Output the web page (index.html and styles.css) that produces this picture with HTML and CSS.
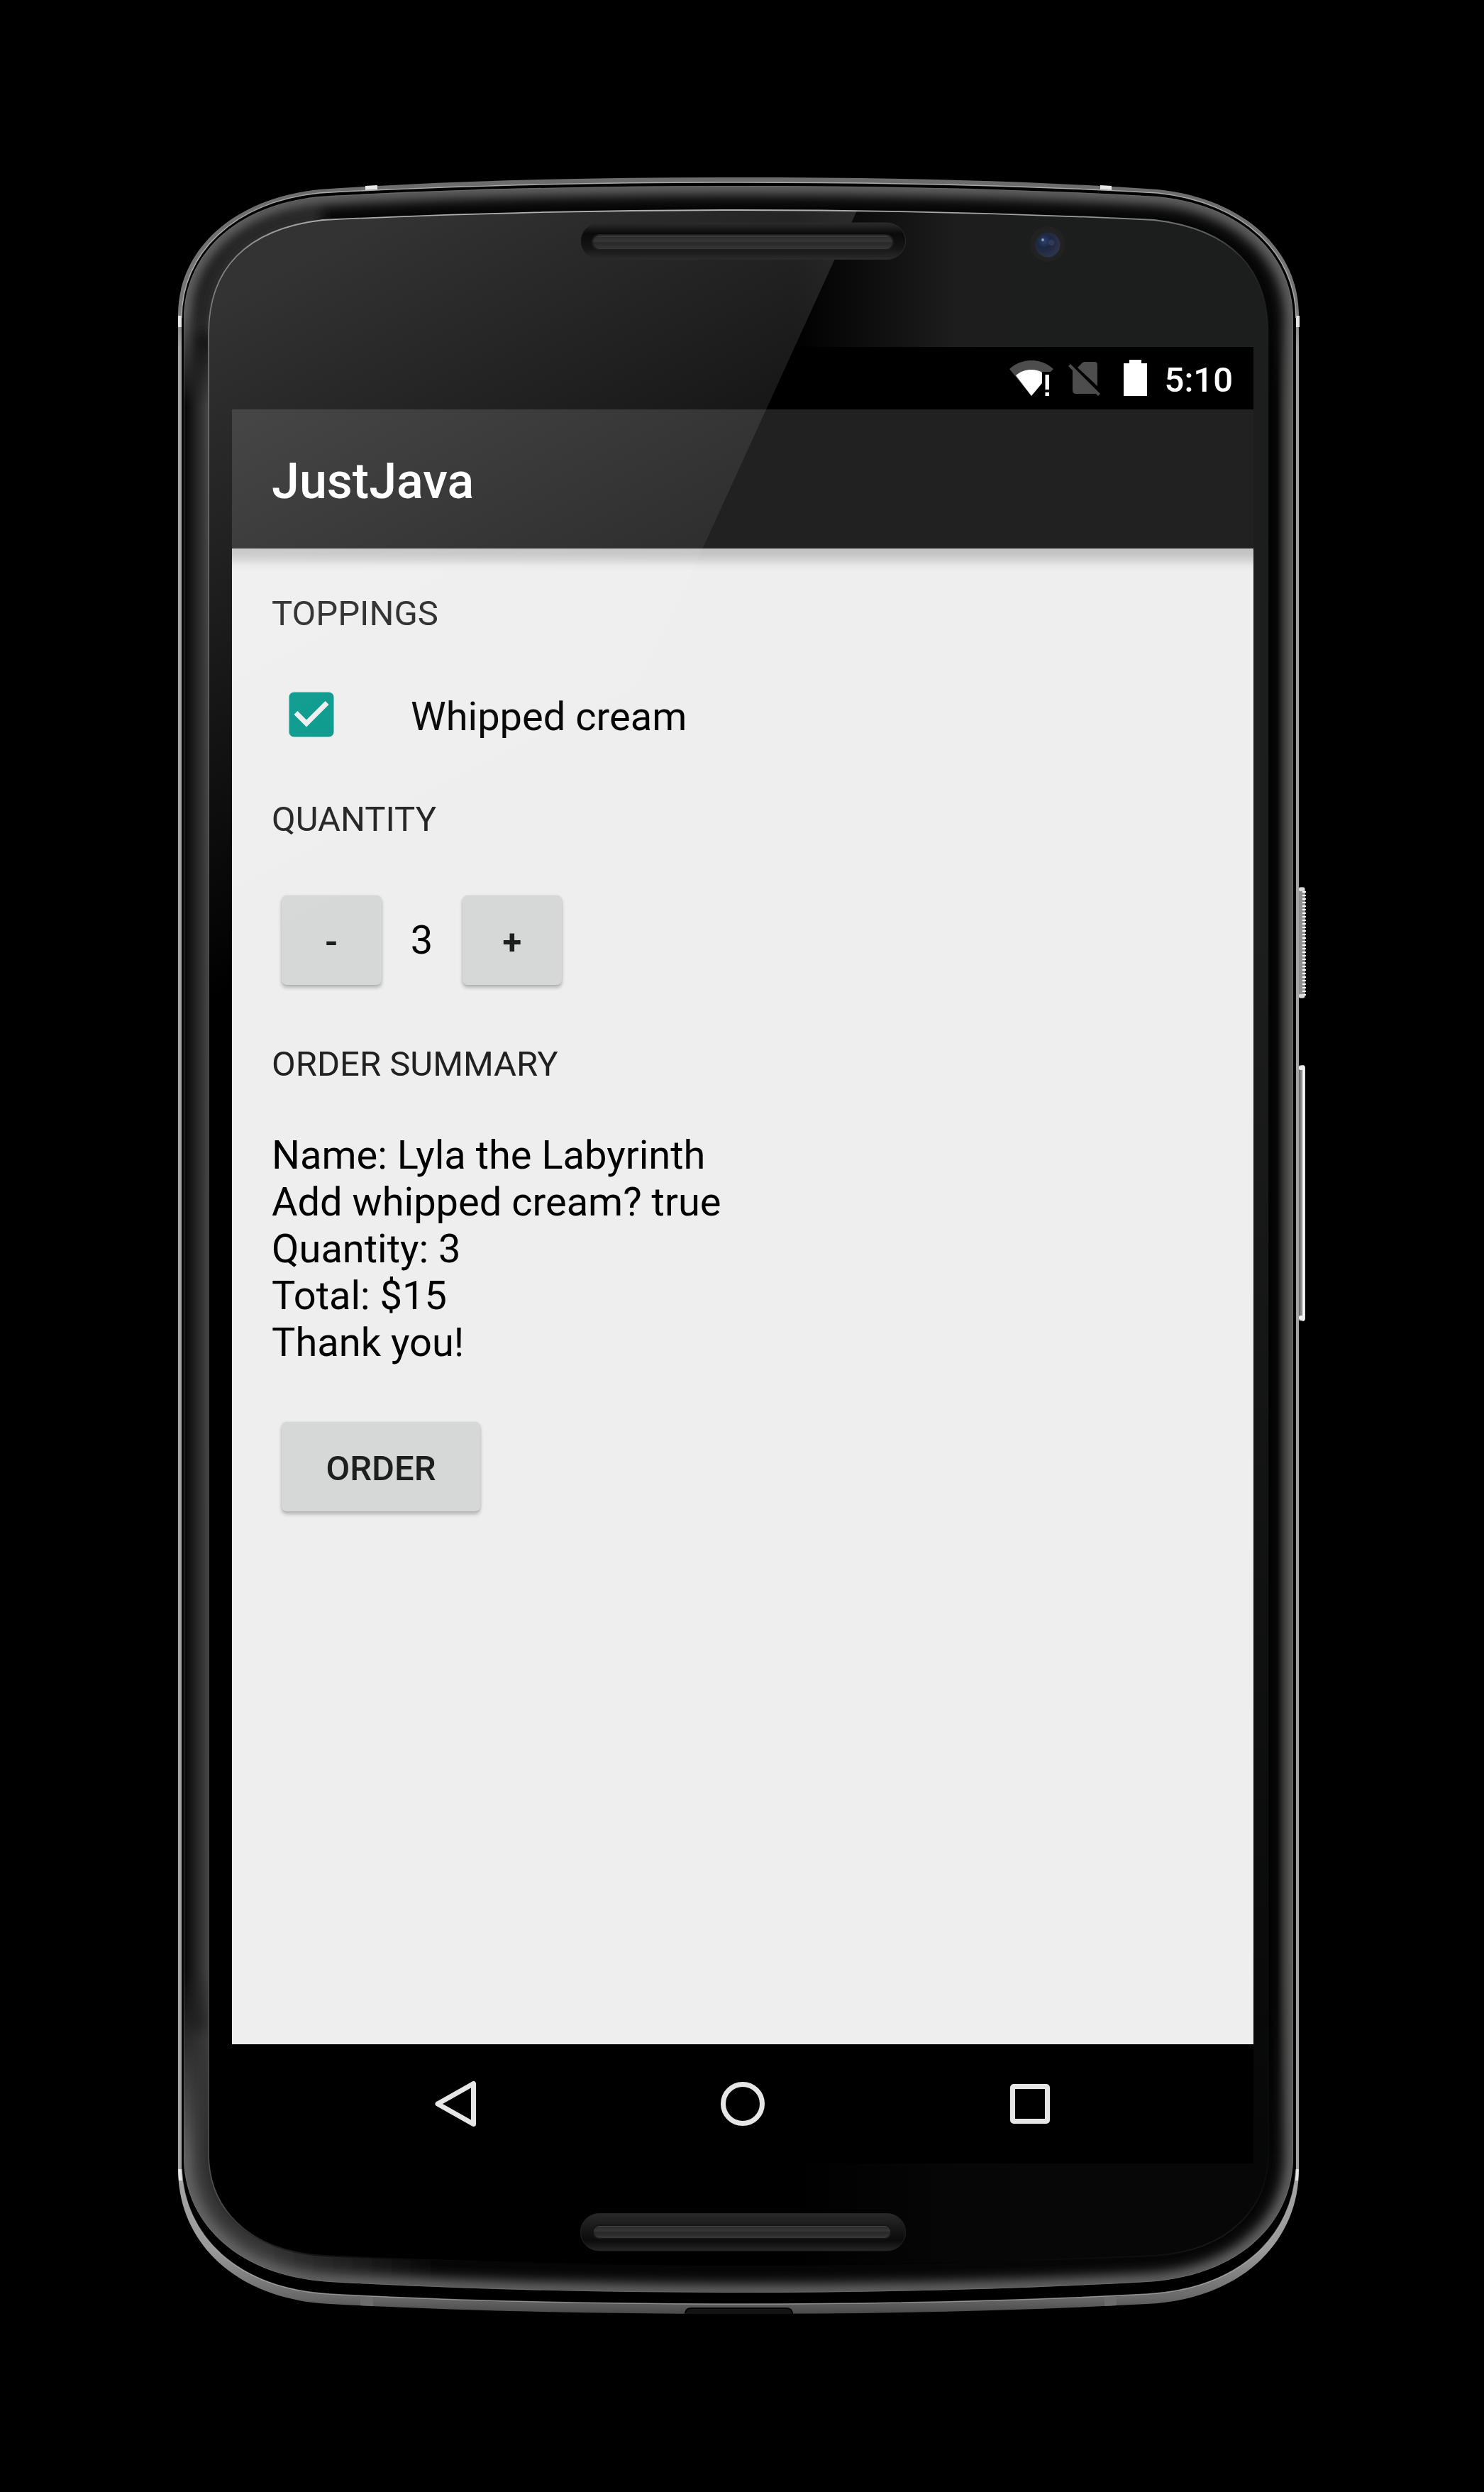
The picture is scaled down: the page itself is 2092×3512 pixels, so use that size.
FILE: index.html
```html
<!DOCTYPE html>
<html lang="en">
<head>
<meta charset="utf-8">
<title>JustJava</title>
<link rel="stylesheet" href="styles.css">
</head>
<body>
<div class="stage">
  <svg class="device" viewBox="0 0 2092 3512" aria-hidden="true">
    <defs>
      <path id="shell" d="M251 444C251 354 326 280 450 267C640 254 840 250 1041 250C1242 250 1442 254 1632 267C1756 280 1831 354 1831 444V3057C1831 3160 1750 3240 1617 3247C1430 3257 1240 3261 1041 3261C842 3261 652 3257 465 3247C332 3240 251 3160 251 3057Z"/>
      <path id="rim" d="M256 448C256 358 328 285 450 272C640 261 840 257 1041 257C1242 257 1442 261 1632 272C1754 285 1827 358 1827 448V3057C1822 3150 1750 3225 1617 3233C1430 3243 1240 3247 1041 3247C842 3247 652 3243 465 3233C332 3225 260 3150 256 3057Z"/>
      <path id="bezel" d="M259 450C259 360 330 289 450 277C640 266 840 262 1041 262C1242 262 1442 266 1632 277C1752 289 1823 360 1823 450V3040C1823 3130 1750 3208 1617 3216C1430 3226 1240 3231 1041 3231C842 3231 652 3226 465 3216C332 3208 259 3130 259 3040Z"/>
      <path id="glass" d="M294 470C294 380 345 323 455 310C640 301 840 296 1041 296C1242 296 1442 301 1627 310C1737 323 1788 380 1788 470V3035C1788 3110 1735 3172 1627 3179C1430 3188 1240 3192 1041 3192C842 3192 652 3188 455 3179C347 3172 294 3110 294 3035Z"/>
      <clipPath id="bezelClip"><use href="#bezel"/></clipPath>
      <linearGradient id="metal" x1="0" y1="250" x2="0" y2="3262" gradientUnits="userSpaceOnUse">
        <stop offset="0" stop-color="#6c6c6c"/><stop offset=".06" stop-color="#777"/><stop offset=".08" stop-color="#a5a5a5"/>
        <stop offset=".93" stop-color="#a5a5a5"/><stop offset=".97" stop-color="#9a9a9a"/><stop offset=".992" stop-color="#696969"/><stop offset="1" stop-color="#484848"/>
      </linearGradient>
      <linearGradient id="leftSide" x1="259" y1="0" x2="294" y2="0" gradientUnits="userSpaceOnUse">
        <stop offset="0" stop-color="#050505"/><stop offset=".3" stop-color="#161616"/><stop offset="1" stop-color="#464646"/>
      </linearGradient>
      <linearGradient id="rightSide" x1="1788" y1="0" x2="1824" y2="0" gradientUnits="userSpaceOnUse">
        <stop offset="0" stop-color="#000"/><stop offset=".35" stop-color="#080808"/><stop offset=".62" stop-color="#3c3c3b"/><stop offset="1" stop-color="#666664"/>
      </linearGradient>
      <linearGradient id="sideFade" x1="0" y1="440" x2="0" y2="3090" gradientUnits="userSpaceOnUse">
        <stop offset="0" stop-color="#000"/><stop offset=".05" stop-color="#fff"/><stop offset=".88" stop-color="#fff"/><stop offset=".98" stop-color="#000"/>
      </linearGradient>
      <mask id="sideMask" maskUnits="userSpaceOnUse" x="250" y="430" width="1590" height="2670"><rect x="250" y="430" width="1590" height="2670" fill="url(#sideFade)"/></mask>
      <linearGradient id="cornerTone" x1="380" y1="0" x2="620" y2="0" gradientUnits="userSpaceOnUse">
        <stop offset="0" stop-color="#343434"/><stop offset="1" stop-color="#343434" stop-opacity="0"/>
      </linearGradient>
      <linearGradient id="glassAcross" x1="1120" y1="0" x2="1500" y2="0" gradientUnits="userSpaceOnUse">
        <stop offset="0" stop-color="#1c1e1d" stop-opacity="0"/><stop offset=".6" stop-color="#1d1d1d"/><stop offset="1" stop-color="#1c1e1d"/>
      </linearGradient>
      <linearGradient id="glassDown" x1="0" y1="1300" x2="0" y2="3050" gradientUnits="userSpaceOnUse">
        <stop offset="0" stop-color="#000" stop-opacity="0"/><stop offset="1" stop-color="#000" stop-opacity=".78"/>
      </linearGradient>
      <linearGradient id="edgeLine" x1="0" y1="296" x2="0" y2="3192" gradientUnits="userSpaceOnUse">
        <stop offset="0" stop-color="#aaa"/><stop offset=".02" stop-color="#777"/><stop offset=".05" stop-color="#666"/><stop offset=".5" stop-color="#444"/><stop offset=".97" stop-color="#4c4c4c"/><stop offset=".993" stop-color="#1c1c1c"/><stop offset="1" stop-color="#000"/>
      </linearGradient>
      <linearGradient id="edgeAcross" x1="1500" y1="0" x2="1788" y2="0" gradientUnits="userSpaceOnUse">
        <stop offset="0" stop-color="#fff"/><stop offset=".7" stop-color="#999"/><stop offset="1" stop-color="#111"/>
      </linearGradient>
      <mask id="edgeMask" maskUnits="userSpaceOnUse" x="250" y="250" width="1600" height="3000"><rect x="250" y="250" width="1600" height="3000" fill="url(#edgeAcross)"/></mask>
      <linearGradient id="slotTop" x1="0" y1="0" x2="0" y2="1">
        <stop offset="0" stop-color="#2c2c2c"/><stop offset=".3" stop-color="#0a0a0a"/><stop offset=".7" stop-color="#151515"/><stop offset="1" stop-color="#2b2b2b"/>
      </linearGradient>
      <linearGradient id="slotBottom" x1="0" y1="0" x2="0" y2="1">
        <stop offset="0" stop-color="#292929"/><stop offset=".32" stop-color="#1b1b1b"/><stop offset=".72" stop-color="#0b0b0b"/><stop offset="1" stop-color="#262626"/>
      </linearGradient>
      <linearGradient id="bar" x1="0" y1="0" x2="0" y2="1">
        <stop offset="0" stop-color="#585858"/><stop offset=".16" stop-color="#2c2c2c"/><stop offset=".4" stop-color="#363636"/><stop offset=".55" stop-color="#282828"/><stop offset="1" stop-color="#383838"/>
      </linearGradient>
      <radialGradient id="lens" cx=".35" cy=".35" r=".7">
        <stop offset="0" stop-color="#2b426d"/><stop offset=".4" stop-color="#1d2740"/><stop offset="1" stop-color="#2f344c"/>
      </radialGradient>
      <linearGradient id="key" x1="0" y1="0" x2="1" y2="0">
        <stop offset="0" stop-color="#555"/><stop offset=".55" stop-color="#9a9a9a"/><stop offset=".7" stop-color="#fff"/><stop offset="1" stop-color="#ddd"/>
      </linearGradient>
      <pattern id="ridges" width="9" height="5" patternUnits="userSpaceOnUse"><rect width="9" height="2" y="1" fill="#fff"/></pattern>
      <filter id="soft" x="-5%" y="-5%" width="110%" height="110%"><feGaussianBlur stdDeviation="9"/></filter>
      <filter id="cornerBlur" x="-30%" y="-30%" width="160%" height="160%"><feGaussianBlur stdDeviation="9"/></filter>
    </defs>

    <rect x="1830" y="1250" width="10" height="157" rx="4" fill="#909090"/>
    <rect x="1836" y="1254" width="5" height="149" fill="url(#ridges)"/>
    <rect x="1831" y="1251" width="8" height="5" rx="2" fill="#ddd"/>
    <rect x="1831" y="1401" width="8" height="5" rx="2" fill="#ddd"/>
    <rect x="1830" y="1501" width="10" height="361" rx="4" fill="url(#key)"/>
    <rect x="1831" y="1502" width="7" height="6" rx="2" fill="#eee"/>
    <rect x="1831" y="1854" width="7" height="6" rx="2" fill="#eee"/>

    <use href="#shell" fill="url(#metal)"/>
    <path d="M515 262l17-1v6l-17 1zM1551 261l16 1v6l-16-1zM251 445h5v16h-5zM1827 445h5v16h-5zM251 3057h5l1 16h-5zM1827 3057h4l-1 16h-5z" fill="#e6e6e6"/>
    <path d="M508 3235l18 1v14l-18-1zM1557 3236l17-1v14l-17 1z" fill="#6c6c6c"/>
    <use href="#rim" fill="#000"/>
    <path d="M256 448C256 358 328 285 450 272C640 261 840 257 1041 257C1242 257 1442 261 1632 272C1754 285 1827 358 1827 448" fill="none" stroke="#aaa" stroke-width="1.5"/>
    <path d="M1827 3057C1822 3150 1750 3225 1617 3233C1430 3243 1240 3247 1041 3247C842 3247 652 3243 465 3233C332 3225 260 3150 256 3057" fill="none" stroke="#c4c4c4" stroke-width="1.5" opacity=".6"/>
    <path d="M966 3262c0-6 3-9 8-9h135c5 0 8 3 8 9z" fill="#141414" stroke="#000" stroke-width="2"/>

    <g clip-path="url(#bezelClip)">
      <use href="#bezel" fill="#060606"/>
      <path d="M280 2860V3035C280 3120 340 3186 480 3190L640 3198" fill="none" stroke="url(#cornerTone)" stroke-width="44" filter="url(#cornerBlur)"/>
      <path d="M294 470C294 380 345 323 455 310" fill="none" stroke="#2a2a2a" stroke-width="36" filter="url(#cornerBlur)"/>
      <use href="#bezel" fill="none" stroke="#6e6e6e" stroke-width="22" filter="url(#soft)"/>
      <g mask="url(#sideMask)">
        <rect x="259" y="440" width="36" height="2650" fill="url(#leftSide)"/>
        <rect x="1788" y="440" width="36" height="2650" fill="url(#rightSide)"/>
      </g>
      <use href="#bezel" fill="none" stroke="#777" stroke-width="2" opacity=".5"/>
    </g>
    <use href="#glass" fill="#000"/>
    <use href="#glass" fill="url(#glassAcross)"/>
    <use href="#glass" fill="url(#glassDown)"/>
    <use href="#glass" fill="none" stroke="url(#edgeLine)" stroke-width="1.8" mask="url(#edgeMask)"/>
  </svg>

  <main class="screen">
    <div class="status">
      <svg class="wifi" viewBox="0 0 62 50" width="62" height="50">
        <path d="M0 12C17-4 45-4 62 12L58 16H46L31 50Z" fill="#4d4d4d"/>
        <path d="M46 16h16v34H46z" fill="#000"/>
        <path d="M9 21C20 11 37 11 46 17V32L31 50Z" fill="#fff"/>
        <path d="M50.500 20h5.500v21h-5.500zM50.500 45h5.500v5h-5.500z" fill="#fff"/>
      </svg>
      <svg class="sim" viewBox="0 0 46 50" width="46" height="50">
        <path d="M13 8l6-6q2-2 4-2h14q4 0 4 4v30zM6 10L40 45H11q-5 0-5-5z" fill="#4d4d4d"/>
        <path d="M3 3L45 45L42 48L0 6z" fill="#4d4d4d"/>
      </svg>
      <svg class="battery" viewBox="0 0 33 51" width="33" height="51"><path d="M8 0h17v5h8v46H0V5h8z" fill="#fff"/></svg>
      <span class="clock">5:10</span>
    </div>
    <header class="appbar"><h1>JustJava</h1></header>
    <section class="content">
      <h2 class="toppings">Toppings</h2>
      <div class="option">
        <svg viewBox="0 0 24 24" width="84" height="84"><path fill="#009688" d="M19 3H5c-1.110 0-2 .9-2 2v14c0 1.100.89 2 2 2h14c1.110 0 2-.9 2-2V5c0-1.100-.89-2-2-2zm-9 14l-5-5 1.410-1.410L10 14.170l7.590-7.590L19 8l-9 9z"/></svg>
        <span>Whipped cream</span>
      </div>
      <h2 class="quantity">Quantity</h2>
      <div class="stepper">
        <button class="btn step">-</button><span class="count">3</span><button class="btn step">+</button>
      </div>
      <h2 class="summary-title">Order summary</h2>
      <p class="summary">Name: Lyla the Labyrinth<br>Add whipped cream? true<br>Quantity: 3<br>Total: $15<br>Thank you!</p>
      <button class="btn order">ORDER</button>
    </section>
    <nav class="navbar">
      <svg viewBox="0 0 70 70" width="70" height="70"><path d="M60.500 6.500V63.500L10 35z"/></svg>
      <svg viewBox="0 0 70 70" width="70" height="70"><circle cx="35" cy="35" r="27.500"/></svg>
      <svg viewBox="0 0 70 70" width="70" height="70"><rect x="10.500" y="10.500" width="49" height="49" rx="1.500"/></svg>
    </nav>
  </main>

  <svg class="glare" viewBox="0 0 2092 3512" aria-hidden="true">
    <defs>
      <linearGradient id="shine" x1="232" y1="464" x2="625" y2="1251" gradientUnits="userSpaceOnUse">
        <stop offset="0" stop-color="#fff" stop-opacity=".2"/><stop offset="1" stop-color="#fff" stop-opacity="0"/>
      </linearGradient>
      <clipPath id="glassClip"><use href="#glass"/></clipPath>
    </defs>
    <path d="M280 280H1215.700L780 1234V1500H280z" fill="url(#shine)" clip-path="url(#glassClip)"/>
    <rect x="818.500" y="314" width="458" height="51.500" rx="26" fill="url(#slotTop)" stroke="#2a2a2a"/>
    <rect x="835" y="331" width="424" height="21" rx="10" fill="url(#bar)" stroke="#1d1d1d" stroke-width="2"/>
    <rect x="818.500" y="3119.500" width="458" height="52.500" rx="26" fill="url(#slotBottom)" stroke="#232323"/>
    <rect x="836" y="3136" width="420" height="19" rx="9" fill="url(#bar)" stroke="#151515" stroke-width="2"/>
    <circle cx="1477" cy="344" r="25" fill="#222"/>
    <circle cx="1477" cy="345" r="17.500" fill="url(#lens)"/>
    <circle cx="1470" cy="338" r="2" fill="#8998bb"/>
    <circle cx="1482" cy="342" r="4" fill="#596685" opacity=".3"/>
  </svg>
</div>
</body>
</html>
```
FILE: styles.css
```css
* { box-sizing: border-box; }

body {
  margin: 0;
  background: #000;
  font-family: Roboto, sans-serif;
}

.stage {
  position: relative;
  width: 2092px;
  height: 3512px;
  padding: 489px 325px 463px 327px;
  overflow: hidden;
}

.device,
.glare {
  position: absolute;
  inset: 0;
  width: 100%;
  height: 100%;
  pointer-events: none;
}

.screen {
  position: relative;
  display: flex;
  flex-direction: column;
  height: 2560px;
}

.status {
  display: flex;
  height: 88px;
  padding: 18px 29px 0 0;
  justify-content: flex-end;
  background: #000;
  color: #fff;
}

.status svg { overflow: visible; }
.wifi { margin: 1px 21px 0 0; }
.sim { margin: 3px 32px 0 0; }
.battery { margin-right: 25px; }

.clock {
  font-size: 49px;
  font-weight: 500;
  line-height: 57px;
}

.appbar {
  display: flex;
  align-items: center;
  height: 196px;
  padding: 5px 56px 0;
  background: #212121;
  color: #fff;
}

.appbar h1 {
  margin: 0;
  font-size: 70px;
  font-weight: 500;
  line-height: 82px;
}

.content {
  flex: 1;
  padding: 63px 56px 0;
  background: linear-gradient(#c2c2c2, #c6c6c6 8px, #d4d4d4 16px, #e8e8e8 24px, #eee 32px);
  color: #000;
}

h2 {
  margin: 0;
  font-size: 49px;
  font-weight: 400;
  line-height: 57px;
  text-transform: uppercase;
  color: #212121;
}

.option {
  display: flex;
  align-items: center;
  height: 84px;
  margin-top: 72px;
  padding-left: 14px;
  gap: 98px;
  font-size: 56px;
  line-height: 66px;
}

.option span { padding-top: 5px; }
.quantity { margin-top: 77px; }

.stepper {
  display: flex;
  margin: 79px 0 0 14px;
}

.count {
  width: 114px;
  padding-top: 30px;
  font-size: 56px;
  line-height: 66px;
  text-align: center;
}

.btn {
  width: 141px;
  height: 126px;
  margin: 0;
  padding: 5px 0 0;
  border: 0;
  border-radius: 7px;
  background: #d6d8d7;
  box-shadow: 0 4px 5px rgba(0, 0, 0, .24), 0 0 3px rgba(0, 0, 0, .1);
  color: #1d1e1e;
  font: 500 49px/57px Roboto, sans-serif;
}

.step {
  width: 140.5px;
  font-weight: 700;
}

.summary-title { margin-top: 83px; }

.summary {
  margin: 67px 0 79px;
  font-size: 56px;
  line-height: 66px;
}

.order {
  width: 280px;
  margin-left: 14px;
}

.navbar {
  display: flex;
  align-items: center;
  justify-content: center;
  gap: 335px;
  height: 168px;
  background: #000;
}

.navbar svg {
  fill: none;
  stroke: #e6e6e6;
  stroke-width: 7px;
  stroke-linejoin: round;
}
```
